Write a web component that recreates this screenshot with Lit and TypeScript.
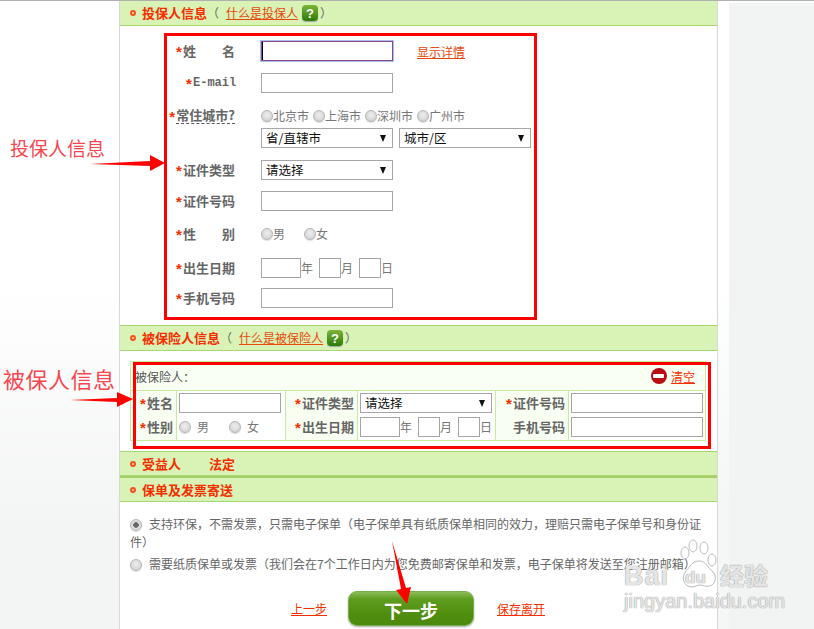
import { LitElement, html, css, svg } from "lit";
import { customElement } from "lit/decorators.js";

@customElement("app-root")
export class AppRoot extends LitElement {
  static styles = css`
    :host {
      display: block;
      position: relative;
      width: 814px;
      height: 629px;
      overflow: hidden;
      background: #fff;
      font-family: "Noto Sans CJK SC", "Liberation Sans", sans-serif;
      font-size: 12px;
      color: #666;
    }
    * { box-sizing: border-box; }
    .page { display: flex; height: 629px; border-top: 1px solid #b0b0b0; }
    .left { width: 119px; background: linear-gradient(to bottom, #fff 0, #fff 45%, #f3f4f4 85%); }
    .main { width: 599px; background: #fff; border-left: 1px solid #d8d8d8; border-right: 1px solid #d8d8d8; }
    .right { width: 11px; background: linear-gradient(to bottom, #fff 0, #fff 45%, #f5f6f6 80%); }
    .rest { flex: 1; background: #f2f3f3; border-top: 2px solid #fff; }

    .head {
      display: flex; align-items: center; height: 26px; padding-left: 10px;
      background: #d9f2b6; border-top: 1px solid #a9d670; border-bottom: 1px solid #a9d670;
      line-height: 1;
    }
    .head.first { border-top: none; height: 25px; }
    .head.h25 { height: 25px; }
    .head.thick { border-top-width: 2px; height: 26px; border-top-color: #a3cf67; }
    .dot { width: 6px; height: 6px; border-radius: 50%; border: 2px solid #f4511e; background: #ffd9a8; margin-right: 6px; flex: none; }
    .title { color: #f32f00; font-size: 13px; font-weight: 700; padding-bottom: 1px; }
    .paren { color: #666; margin-right: 7px; }
    .link { color: #e8480c; text-decoration: underline; }
    .link.red { color: #f32f00; }
    .help {
      display: inline-flex; align-items: center; justify-content: center;
      width: 16px; height: 16px; margin-left: 4px; border-radius: 4px;
      background: linear-gradient(#7cb53a, #2f7a08); color: #fff; font: 700 13px "Liberation Sans", sans-serif;
      box-shadow: 0 1px 1px #9aa;
    }
    .tail { color: #666; margin-left: 2px; }

    .form {
      height: 299px; padding: 15px 0 0 45px;
      display: grid; grid-template-columns: 70px 1fr;
      grid-template-rows: 32px 33px 22px 32px 31px 33px 34px 30px 20px;
      column-gap: 26px; align-items: start;
    }
    .lab {
      display: flex; justify-content: flex-end; align-items: center; height: 20px; padding-bottom: 1px;
      font-size: 13px; font-weight: 700; color: #666; line-height: 1; white-space: nowrap;
    }
    .star { color: #f32f00; font: 700 15px/1 "Liberation Sans", sans-serif; margin-top: 2px; width: 7px; flex: none; }
    .two { display: inline-flex; justify-content: space-between; width: 52px; }
    .mono { font: 700 12px "Liberation Mono", monospace; width: 42px; }
    .dashed { border-bottom: 1px dashed #555; padding-bottom: 2px; }
    .field { display: flex; align-items: center; height: 20px; white-space: nowrap; }
    input[type="text"] {
      height: 20px; width: 132px; border: 1px solid #a6a6a6; background: #fff; padding: 0 0 0 1px;
      outline: none; margin: 0; font: 12px "Liberation Sans", sans-serif; display: block; flex: none;
    }
    input.focus { border-color: #8e4a86; box-shadow: 0 0 0 1px #a9bcec; }
    input.caret { background: linear-gradient(#000, #000) no-repeat 0 0 / 1px 100% #fff; }
    .w40 { width: 40px !important; }
    .w22 { width: 22px !important; }
    .w102 { width: 102px !important; }
    input[type="radio"] {
      appearance: none; -webkit-appearance: none; width: 12px; height: 12px; margin: 0; flex: none;
      border-radius: 50%; border: 1px solid #b5b5b5; background: radial-gradient(circle at 50% 40%, #eee, #ccc);
      box-shadow: 0 1px 1px #ddd;
    }
    input[type="radio"]:checked { background: radial-gradient(circle, #666 0 2.5px, #ddd 3px); }
    .opt { color: #777; line-height: 1; }
    .mr4 { margin-right: 4px; }
    .mr6 { margin-right: 6px; }
    .mr19 { margin-right: 19px; }
    .sexa { margin: 0 20px 0 6px; }
    .sexb { margin-left: 6px; }
    .sel { position: relative; display: block; width: 132px; height: 20px; flex: none; }
    .sel select {
      appearance: none; -webkit-appearance: none; width: 100%; height: 100%; border: 1px solid #a6a6a6; border-radius: 0;
      background: #fff; color: #111; padding: 1px 0 0 4px; font: 12.5px "Noto Sans CJK SC", sans-serif; outline: none; display: block; line-height: 1;
    }
    .sel::after {
      content: ""; position: absolute; right: 7px; top: 7px;
      border-left: 3.5px solid transparent; border-right: 3.5px solid transparent; border-top: 7px solid #111;
      pointer-events: none;
    }
    .selects { gap: 6px; }
    .detail { gap: 24px; }

    .insured { height: 100px; padding: 10px 0 0 10px; }
    .table {
      width: 576px; height: 80px; border: 1px solid #c9eb9c; background: #f9fef2;
      display: grid; grid-template-columns: 46px 109px 72px 138px 73px 136px; grid-template-rows: 29px 1fr;
    }
    .top { grid-column: 1 / -1; display: flex; align-items: center; justify-content: space-between; border-bottom: 1px solid #c9eb9c; padding: 0 10px 0 4px; color: #555; background: #fafff3; }
    .clear { display: flex; align-items: center; gap: 4px; }
    .stop { width: 16px; height: 16px; border-radius: 50%; background: #b80d14; display: flex; align-items: center; justify-content: center; }
    .stop i { display: block; width: 11px; height: 4px; background: #fff; border-radius: 1px; }
    .col { display: flex; flex-direction: column; gap: 4px; padding: 2px 2px 0 2px; border-right: 1px solid #c9eb9c; }
    .col:last-child { border-right: none; }
    .col.l { padding-right: 3px; padding-left: 0; }
    .col.v { background: #fff; }

    .choice { padding: 13px 10px 0 10px; line-height: 18px; height: 86px; color: #666; }
    .choice p { margin: 0; }
    .choice p + p { margin-top: 4px; }
    .choice input { display: inline-block; vertical-align: -2px; margin-right: 7px; }

    .foot { display: flex; align-items: center; height: 41px; padding-left: 171px; }
    .foot .link { width: 57px; color: #f32f00; }
    .go {
      width: 126px; height: 35px; border: 1px solid #79b04e; border-radius: 9px; color: #fff;
      background: linear-gradient(#8cbd5a 0, #5d9c1d 22%, #4f8d0e 70%, #4a8a0c 100%);
      font: 700 18px "Noto Sans CJK SC", sans-serif; padding: 3px 0 0; box-shadow: 0 1px 2px #aaa; margin-right: 23px;
    }

    .box { position: absolute; border: 3px solid #f00; pointer-events: none; }
    .box1 { left: 164px; top: 33px; width: 373px; height: 287px; }
    .box2 { left: 133px; top: 362px; width: 578px; height: 87px; }
    .note { position: absolute; color: #f4474f; font-weight: 400; line-height: 1; white-space: nowrap; }
    .n1 { left: 10px; top: 138px; font-size: 19px; }
    .n2 { left: 3px; top: 367px; font-size: 22px; letter-spacing: .5px; }
    .over { position: absolute; left: 0; top: 0; pointer-events: none; }
    .mark {
      position: absolute; color: rgba(255, 255, 255, .75); white-space: nowrap; line-height: 1;
      text-shadow: 0 0 1px #999, 0 0 1px #999; font-family: "Liberation Sans", sans-serif;
    }
    .m1 { left: 624px; top: 563px; font-size: 27px; font-weight: 700; letter-spacing: 1px; }
    .m2 { left: 685px; top: 569px; font-size: 17px; font-weight: 700; }
    .m3 { left: 720px; top: 563px; font-size: 24px; font-weight: 700; font-family: "Noto Sans CJK SC", sans-serif; }
    .m4 { left: 624px; top: 591px; font-size: 20px; }
  `;

  private sel(label: string) {
    return html`<label class="sel"><select><option>${label}</option></select></label>`;
  }

  private date() {
    return html`<div class="field"><input type="text" class="w40" /><span class="opt mr6">年</span><input type="text" class="w22" /><span class="opt mr6">月</span><input type="text" class="w22" /><span class="opt">日</span></div>`;
  }

  render() {
    return html`
      <div class="page">
        <div class="left"></div>
        <div class="main">
          <div class="head first">
            <i class="dot"></i><span class="title">投保人信息</span><span class="paren">\uFF08</span>
            <a class="link">什么是投保人</a><span class="help">?</span><span class="tail">\uFF09</span>
          </div>
          <div class="form">
            <div class="lab"><span class="star">*</span><span class="two"><span>姓</span><span>名</span></span></div>
            <div class="field detail"><input type="text" class="focus caret" /><a class="link">显示详情</a></div>
            <div class="lab"><span class="star">*</span><span class="mono">E-mail</span></div>
            <div class="field"><input type="text" /></div>
            <div class="lab"><span class="star">*</span><span class="dashed">常住城市?</span></div>
            <div class="field">
              <input type="radio" name="c" /><span class="opt mr4">北京市</span>
              <input type="radio" name="c" /><span class="opt mr4">上海市</span>
              <input type="radio" name="c" /><span class="opt mr4">深圳市</span>
              <input type="radio" name="c" /><span class="opt">广州市</span>
            </div>
            <div></div>
            <div class="field selects">${this.sel("省/直辖市")}${this.sel("城市/区")}</div>
            <div class="lab"><span class="star">*</span>证件类型</div>
            <div class="field">${this.sel("请选择")}</div>
            <div class="lab"><span class="star">*</span>证件号码</div>
            <div class="field"><input type="text" /></div>
            <div class="lab"><span class="star">*</span><span class="two"><span>性</span><span>别</span></span></div>
            <div class="field"><input type="radio" name="s" /><span class="opt mr19">男</span><input type="radio" name="s" /><span class="opt">女</span></div>
            <div class="lab"><span class="star">*</span>出生日期</div>
            ${this.date()}
            <div class="lab"><span class="star">*</span>手机号码</div>
            <div class="field"><input type="text" /></div>
          </div>

          <div class="head">
            <i class="dot"></i><span class="title">被保险人信息</span><span class="paren">\uFF08</span>
            <a class="link">什么是被保险人</a><span class="help">?</span><span class="tail">\uFF09</span>
          </div>
          <div class="insured">
            <div class="table">
              <div class="top"><span>被保险人\uFF1A</span><span class="clear"><span class="stop"><i></i></span><a class="link red">清空</a></span></div>
              <div class="col l">
                <div class="lab"><span class="star">*</span>姓名</div>
                <div class="lab"><span class="star">*</span>性别</div>
              </div>
              <div class="col v">
                <div class="field"><input type="text" class="w102" /></div>
                <div class="field"><input type="radio" name="s2" /><span class="opt sexa">男</span><input type="radio" name="s2" /><span class="opt sexb">女</span></div>
              </div>
              <div class="col l">
                <div class="lab"><span class="star">*</span>证件类型</div>
                <div class="lab"><span class="star">*</span>出生日期</div>
              </div>
              <div class="col v">
                <div class="field">${this.sel("请选择")}</div>
                ${this.date()}
              </div>
              <div class="col l">
                <div class="lab"><span class="star">*</span>证件号码</div>
                <div class="lab">手机号码</div>
              </div>
              <div class="col v">
                <div class="field"><input type="text" /></div>
                <div class="field"><input type="text" /></div>
              </div>
            </div>
          </div>

          <div class="head h25"><i class="dot"></i><span class="title">受益人</span><span class="title" style="margin-left:28px">法定</span></div>
          <div class="head thick"><i class="dot"></i><span class="title">保单及发票寄送</span></div>

          <div class="choice">
            <p><input type="radio" name="p" checked />支持环保\uFF0C不需发票\uFF0C只需电子保单\uFF08电子保单具有纸质保单相同的效力\uFF0C理赔只需电子保单号和身份证件\uFF09</p>
            <p><input type="radio" name="p" />需要纸质保单或发票\uFF08我们会在7个工作日内为您免费邮寄保单和发票\uFF0C电子保单将发送至您注册邮箱\uFF09</p>
          </div>
          <div class="foot">
            <a class="link">上一步</a>
            <button class="go">下一步</button>
            <a class="link">保存离开</a>
          </div>
        </div>
        <div class="right"></div>
        <div class="rest"></div>
      </div>

      <div class="box box1"></div>
      <div class="box box2"></div>
      <div class="note n1">投保人信息</div>
      <div class="note n2">被保人信息</div>
      <svg class="over" width="814" height="629" viewBox="0 0 814 629">
        ${svg`
          <polygon fill="#f00" points="90,164 150,161 150,155 165,163 150,171 150,166" />
          <polygon fill="#f00" points="70,400 117,398 117,392 133,399 117,407 117,402" />
          <polygon fill="#f00" points="392,541 406,588 411,587 407,604 396,590 401,589" />
          <g fill="#fff" fill-opacity=".65" stroke="#bbb" stroke-width="1">
            <ellipse cx="685" cy="553" rx="4" ry="6" />
            <ellipse cx="693" cy="546" rx="4" ry="6" />
            <ellipse cx="704" cy="548" rx="4" ry="6" />
            <ellipse cx="712" cy="560" rx="4" ry="6" />
            <path d="M699 561c-7 0-9 6-13 10-5 5-3 16 6 16 3 0 5-2 8-2s6 2 9 1c7-1 8-10 4-14-5-4-7-11-14-11z" />
          </g>
        `}
      </svg>
      <span class="mark m1">Bai</span>
      <span class="mark m2">du</span>
      <span class="mark m3">经验</span>
      <span class="mark m4">jingyan.baidu.com</span>
    `;
  }
}
